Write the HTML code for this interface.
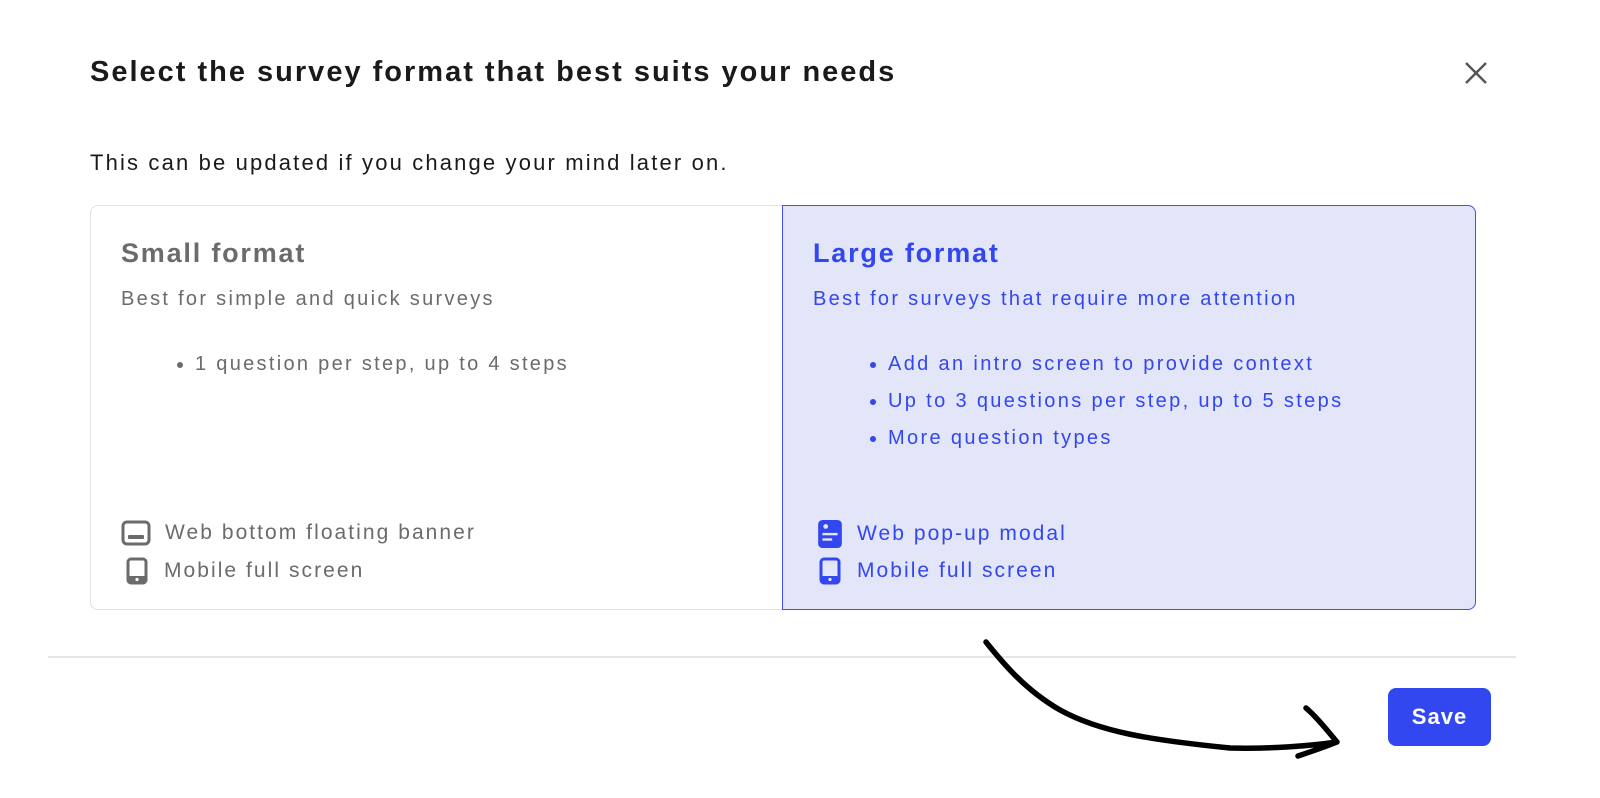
<!DOCTYPE html>
<html><head><meta charset="utf-8"><style>
body{margin:0;width:1600px;height:798px;background:#fff;font-family:"Liberation Sans",sans-serif;position:relative;overflow:hidden}
.a{position:absolute}
h1{position:absolute;left:90px;top:56px;margin:0;font-size:29px;font-weight:bold;color:#1a1a1a;letter-spacing:2px}
.sub{left:90px;top:150px;font-size:22px;color:#1a1a1a;letter-spacing:2.15px}
.card{position:absolute;top:205px;height:405px;box-sizing:border-box}
.c1{left:90px;width:694px;border:1.5px solid #e2e2e2;border-right:none;border-radius:8px 0 0 8px}
.c2{left:782px;width:694px;border:1.5px solid #3d4ff5;background:#e3e5f8;border-radius:0 8px 8px 0}
.t{position:absolute;left:30px;top:32px;font-size:27px;font-weight:bold;letter-spacing:1.8px}
.d{position:absolute;left:30px;top:82px;font-size:20px;letter-spacing:2.3px}
ul{position:absolute;top:140px;margin:0;padding-left:19px;font-size:20px;line-height:37px;letter-spacing:2.3px}
.f{position:absolute;left:30px;font-size:21px;display:flex;align-items:center;letter-spacing:2.05px}
.f svg{margin-right:14px}
</style></head><body>
<h1>Select the survey format that best suits your needs</h1>
<svg class="a" style="left:1464px;top:61px" width="24" height="24" viewBox="0 0 24 24"><path d="M2 2L22 22M22 2L2 22" stroke="#555" stroke-width="2.4"/></svg>
<div class="a sub">This can be updated if you change your mind later on.</div>
<div class="card c1" style="color:#6b6b6b">
<div class="t">Small format</div>
<div class="d">Best for simple and quick surveys</div>
<ul style="left:85px"><li>1 question per step, up to 4 steps</li></ul>
<div class="f" style="top:314px"><svg width="30" height="26" viewBox="0 0 30 26"><rect x="2" y="2" width="26" height="22" rx="4" fill="none" stroke="#6b6b6b" stroke-width="3"/><rect x="7" y="15" width="16" height="4" rx="1" fill="#6b6b6b"/></svg>Web bottom floating banner</div>
<div class="f" style="top:351px;left:33px"><svg width="26" height="28" viewBox="0 0 22 28"><rect x="2" y="2" width="18" height="24" rx="3" fill="none" stroke="#6b6b6b" stroke-width="3"/><rect x="2" y="19" width="18" height="7" fill="#6b6b6b"/><circle cx="11" cy="22.5" r="1.6" fill="#fff"/></svg>Mobile full screen</div>
</div>
<div class="card c2" style="color:#3347f0">
<div class="t">Large format</div>
<div class="d">Best for surveys that require more attention</div>
<ul style="left:86px;letter-spacing:2.35px"><li>Add an intro screen to provide context</li><li>Up to 3 questions per step, up to 5 steps</li><li>More question types</li></ul>
<div class="f" style="top:314px;left:34px"><svg width="26" height="28" viewBox="0 0 22 26"><rect x="0" y="0" width="22" height="26" rx="4" fill="#3347f0"/><circle cx="7" cy="6" r="2.2" fill="#e3e5f8"/><rect x="4" y="12" width="14" height="2.2" fill="#e3e5f8"/><rect x="4" y="17" width="9" height="2.2" fill="#e3e5f8"/></svg>Web pop-up modal</div>
<div class="f" style="top:351px;left:34px"><svg width="26" height="28" viewBox="0 0 22 28"><rect x="2" y="2" width="18" height="24" rx="3" fill="none" stroke="#3347f0" stroke-width="3"/><rect x="2" y="19" width="18" height="7" fill="#3347f0"/><circle cx="11" cy="22.5" r="1.6" fill="#e3e5f8"/></svg>Mobile full screen</div>
</div>
<div class="a" style="left:48px;top:656px;width:1468px;height:2px;background:#e6e6e6"></div>
<svg class="a" style="left:0;top:0" width="1600" height="798"><path d="M986 642 C1002 662 1025 690 1060 710 C1100 732 1150 740 1230 748 C1270 749 1310 746 1337 742 M1306 708 C1318 718 1330 734 1337 742 C1322 748 1310 752 1298 756" fill="none" stroke="#000" stroke-width="5.5" stroke-linecap="round" stroke-linejoin="round"/></svg>
<div class="a" style="left:1388px;top:688px;width:103px;height:58px;background:#3347f0;border-radius:8px;color:#fff;font-weight:bold;font-size:22px;line-height:58px;text-align:center;letter-spacing:1px">Save</div>
</body></html>
